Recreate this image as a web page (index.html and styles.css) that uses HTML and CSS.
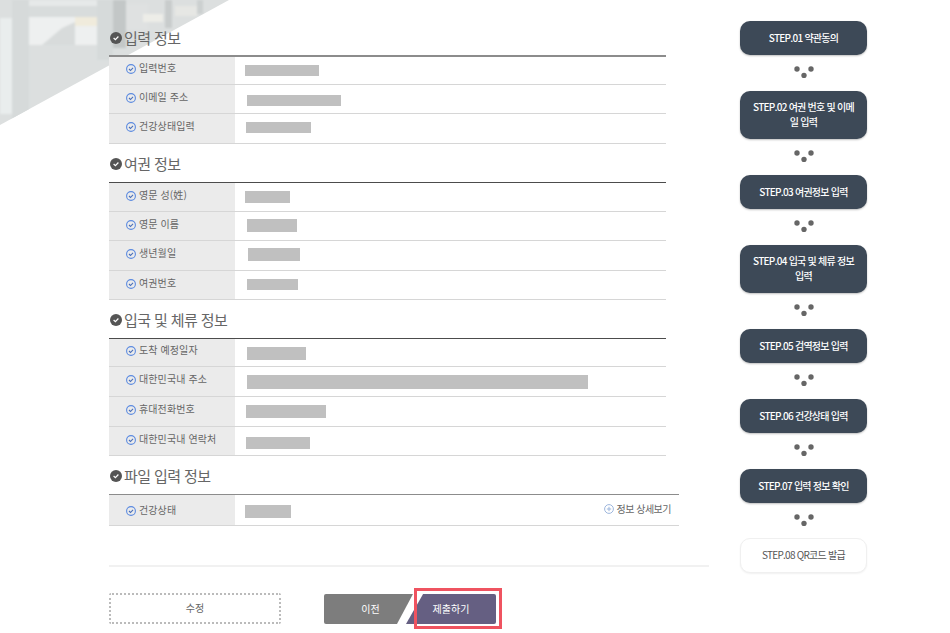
FILE: index.html
```html
<!DOCTYPE html>
<html lang="ko">
<head>
<meta charset="utf-8">
<title>입력 정보 확인</title>
<link rel="stylesheet" href="styles.css">
</head>
<body>
<svg class="photo" width="230" height="126" viewBox="0 0 230 126" aria-hidden="true">
  <defs><clipPath id="corner"><polygon points="0,0 229,0 0,125"/></clipPath>
  <filter id="soft"><feGaussianBlur stdDeviation="0.9"/></filter></defs>
  <g clip-path="url(#corner)">
    <rect width="230" height="126" fill="#dcdfdf"/>
    <g filter="url(#soft)">
      <rect x="0" y="18" width="12" height="96" fill="#e9eded"/>
      <rect x="12" y="0" width="17" height="126" fill="#d6dada"/>
      <rect x="29" y="0" width="68" height="6" fill="#e6e9e9"/>
      <rect x="29" y="6" width="68" height="11" fill="#d8dcdc"/>
      <rect x="29" y="17" width="68" height="28" fill="#eef0f0"/>
      <rect x="75" y="17" width="22" height="9" fill="#f0ebdc"/>
      <polygon points="42,45 62,28 75,22 75,45" fill="#d8dbdb"/>
      <rect x="97" y="0" width="16" height="60" fill="#d6dada"/>
      <rect x="113" y="0" width="13" height="48" fill="#c3c7c7"/>
      <rect x="126" y="4" width="22" height="26" fill="#dfe1e1"/>
      <rect x="143" y="14" width="20" height="8" fill="#ededE8"/>
      <rect x="165" y="0" width="7" height="28" fill="#c8cccc"/>
      <rect x="175" y="6" width="22" height="10" fill="#e6e7e4"/>
      <rect x="197" y="0" width="6" height="14" fill="#ccd0d0"/>
    </g>
  </g>
</svg>
<div class="page">
  <main class="main">
    <h2 class="heading first"><svg class="head-icon" width="12" height="12" viewBox="0 0 12 12"><circle cx="6" cy="6" r="6" fill="#555"/><path d="M3.6 6l1.8 1.7 3-3.2" fill="none" stroke="#fff" stroke-width="1.2"/></svg>입력 정보</h2>
    <div class="table thick">
      <div class="row h28"><div class="label"><svg class="check" width="10" height="10" viewBox="0 0 10 10"><circle cx="5" cy="5" r="4.4" fill="none" stroke="#5b8ae0" stroke-width="1.1"/><path d="M3 5l1.5 1.5L7 3.8" fill="none" stroke="#4a6fb8" stroke-width="1.1"/></svg>입력번호</div><div class="value"><span class="bar" style="--x:10px;--y:8px;--w:74px;--h:11px"></span></div></div>
      <div class="row h29"><div class="label"><svg class="check" width="10" height="10" viewBox="0 0 10 10"><circle cx="5" cy="5" r="4.4" fill="none" stroke="#5b8ae0" stroke-width="1.1"/><path d="M3 5l1.5 1.5L7 3.8" fill="none" stroke="#4a6fb8" stroke-width="1.1"/></svg>이메일 주소</div><div class="value"><span class="bar" style="--x:12px;--y:10px;--w:94px;--h:11px"></span></div></div>
      <div class="row h30"><div class="label"><svg class="check" width="10" height="10" viewBox="0 0 10 10"><circle cx="5" cy="5" r="4.4" fill="none" stroke="#5b8ae0" stroke-width="1.1"/><path d="M3 5l1.5 1.5L7 3.8" fill="none" stroke="#4a6fb8" stroke-width="1.1"/></svg>건강상태입력</div><div class="value"><span class="bar" style="--x:11px;--y:8px;--w:65px;--h:11px"></span></div></div>
    </div>

    <h2 class="heading"><svg class="head-icon" width="12" height="12" viewBox="0 0 12 12"><circle cx="6" cy="6" r="6" fill="#555"/><path d="M3.6 6l1.8 1.7 3-3.2" fill="none" stroke="#fff" stroke-width="1.2"/></svg>여권 정보</h2>
    <div class="table">
      <div class="row h29"><div class="label"><svg class="check" width="10" height="10" viewBox="0 0 10 10"><circle cx="5" cy="5" r="4.4" fill="none" stroke="#5b8ae0" stroke-width="1.1"/><path d="M3 5l1.5 1.5L7 3.8" fill="none" stroke="#4a6fb8" stroke-width="1.1"/></svg>영문 성(姓)</div><div class="value"><span class="bar" style="--x:10px;--y:8px;--w:45px;--h:12px"></span></div></div>
      <div class="row h29"><div class="label"><svg class="check" width="10" height="10" viewBox="0 0 10 10"><circle cx="5" cy="5" r="4.4" fill="none" stroke="#5b8ae0" stroke-width="1.1"/><path d="M3 5l1.5 1.5L7 3.8" fill="none" stroke="#4a6fb8" stroke-width="1.1"/></svg>영문 이름</div><div class="value"><span class="bar" style="--x:12px;--y:7px;--w:50px;--h:13px"></span></div></div>
      <div class="row h30"><div class="label"><svg class="check" width="10" height="10" viewBox="0 0 10 10"><circle cx="5" cy="5" r="4.4" fill="none" stroke="#5b8ae0" stroke-width="1.1"/><path d="M3 5l1.5 1.5L7 3.8" fill="none" stroke="#4a6fb8" stroke-width="1.1"/></svg>생년월일</div><div class="value"><span class="bar" style="--x:13px;--y:7px;--w:52px;--h:13px"></span></div></div>
      <div class="row h29"><div class="label"><svg class="check" width="10" height="10" viewBox="0 0 10 10"><circle cx="5" cy="5" r="4.4" fill="none" stroke="#5b8ae0" stroke-width="1.1"/><path d="M3 5l1.5 1.5L7 3.8" fill="none" stroke="#4a6fb8" stroke-width="1.1"/></svg>여권번호</div><div class="value"><span class="bar" style="--x:12px;--y:8px;--w:51px;--h:11px"></span></div></div>
    </div>

    <h2 class="heading"><svg class="head-icon" width="12" height="12" viewBox="0 0 12 12"><circle cx="6" cy="6" r="6" fill="#555"/><path d="M3.6 6l1.8 1.7 3-3.2" fill="none" stroke="#fff" stroke-width="1.2"/></svg>입국 및 체류 정보</h2>
    <div class="table">
      <div class="row h28"><div class="label"><svg class="check" width="10" height="10" viewBox="0 0 10 10"><circle cx="5" cy="5" r="4.4" fill="none" stroke="#5b8ae0" stroke-width="1.1"/><path d="M3 5l1.5 1.5L7 3.8" fill="none" stroke="#4a6fb8" stroke-width="1.1"/></svg>도착 예정일자</div><div class="value"><span class="bar" style="--x:12px;--y:8px;--w:59px;--h:13px"></span></div></div>
      <div class="row h30"><div class="label"><svg class="check" width="10" height="10" viewBox="0 0 10 10"><circle cx="5" cy="5" r="4.4" fill="none" stroke="#5b8ae0" stroke-width="1.1"/><path d="M3 5l1.5 1.5L7 3.8" fill="none" stroke="#4a6fb8" stroke-width="1.1"/></svg>대한민국내 주소</div><div class="value"><span class="bar" style="--x:12px;--y:8px;--w:341px;--h:14px"></span></div></div>
      <div class="row h30"><div class="label"><svg class="check" width="10" height="10" viewBox="0 0 10 10"><circle cx="5" cy="5" r="4.4" fill="none" stroke="#5b8ae0" stroke-width="1.1"/><path d="M3 5l1.5 1.5L7 3.8" fill="none" stroke="#4a6fb8" stroke-width="1.1"/></svg>휴대전화번호</div><div class="value"><span class="bar" style="--x:11px;--y:8px;--w:80px;--h:13px"></span></div></div>
      <div class="row h29"><div class="label"><svg class="check" width="10" height="10" viewBox="0 0 10 10"><circle cx="5" cy="5" r="4.4" fill="none" stroke="#5b8ae0" stroke-width="1.1"/><path d="M3 5l1.5 1.5L7 3.8" fill="none" stroke="#4a6fb8" stroke-width="1.1"/></svg>대한민국내 연락처</div><div class="value"><span class="bar" style="--x:11px;--y:10px;--w:64px;--h:12px"></span></div></div>
    </div>

    <h2 class="heading"><svg class="head-icon" width="12" height="12" viewBox="0 0 12 12"><circle cx="6" cy="6" r="6" fill="#555"/><path d="M3.6 6l1.8 1.7 3-3.2" fill="none" stroke="#fff" stroke-width="1.2"/></svg>파일 입력 정보</h2>
    <div class="table wide">
      <div class="row h31"><div class="label"><svg class="check" width="10" height="10" viewBox="0 0 10 10"><circle cx="5" cy="5" r="4.4" fill="none" stroke="#5b8ae0" stroke-width="1.1"/><path d="M3 5l1.5 1.5L7 3.8" fill="none" stroke="#4a6fb8" stroke-width="1.1"/></svg>건강상태</div><div class="value split"><span class="bar" style="--x:10px;--y:10px;--w:46px;--h:13px"></span><span class="more"><svg class="plus" width="10" height="10" viewBox="0 0 10 10"><circle cx="5" cy="5" r="4.4" fill="none" stroke="#9db6dc"/><path d="M2.8 5h4.4M5 2.8v4.4" stroke="#9db6dc"/></svg>정보 상세보기</span></div></div>
    </div>

    <div class="divider"></div>
    <div class="actions">
      <button class="btn-edit">수정</button>
      <div class="pair">
        <button class="btn-prev">이전</button>
        <button class="btn-submit">제출하기<span class="highlight"></span></button>
      </div>
    </div>
  </main>

  <aside class="steps">
    <div class="step">STEP.01 약관동의</div>
    <svg class="dots" width="20" height="12" viewBox="0 0 20 12"><circle cx="3" cy="3" r="2.7"/><circle cx="17" cy="3" r="2.7"/><circle cx="10" cy="9.5" r="2.7"/></svg>
    <div class="step">STEP.02 여권 번호 및 이메일 입력</div>
    <svg class="dots" width="20" height="12" viewBox="0 0 20 12"><circle cx="3" cy="3" r="2.7"/><circle cx="17" cy="3" r="2.7"/><circle cx="10" cy="9.5" r="2.7"/></svg>
    <div class="step">STEP.03 여권정보 입력</div>
    <svg class="dots" width="20" height="12" viewBox="0 0 20 12"><circle cx="3" cy="3" r="2.7"/><circle cx="17" cy="3" r="2.7"/><circle cx="10" cy="9.5" r="2.7"/></svg>
    <div class="step">STEP.04 입국 및 체류 정보 입력</div>
    <svg class="dots" width="20" height="12" viewBox="0 0 20 12"><circle cx="3" cy="3" r="2.7"/><circle cx="17" cy="3" r="2.7"/><circle cx="10" cy="9.5" r="2.7"/></svg>
    <div class="step">STEP.05 검역정보 입력</div>
    <svg class="dots" width="20" height="12" viewBox="0 0 20 12"><circle cx="3" cy="3" r="2.7"/><circle cx="17" cy="3" r="2.7"/><circle cx="10" cy="9.5" r="2.7"/></svg>
    <div class="step">STEP.06 건강상태 입력</div>
    <svg class="dots" width="20" height="12" viewBox="0 0 20 12"><circle cx="3" cy="3" r="2.7"/><circle cx="17" cy="3" r="2.7"/><circle cx="10" cy="9.5" r="2.7"/></svg>
    <div class="step">STEP.07 입력 정보 확인</div>
    <svg class="dots last-gap" width="20" height="12" viewBox="0 0 20 12"><circle cx="3" cy="3" r="2.7"/><circle cx="17" cy="3" r="2.7"/><circle cx="10" cy="9.5" r="2.7"/></svg>
    <div class="step todo">STEP.08 QR코드 발급</div>
  </aside>
</div>
</body>
</html>
```
FILE: styles.css
```css
* { box-sizing: border-box; }
html, body { margin: 0; padding: 0; }
body {
  width: 950px;
  height: 633px;
  overflow: hidden;
  background: #fff;
  font-family: "Noto Sans CJK KR", "Noto Sans", sans-serif;
  color: #555;
  position: relative;
}
.photo { position: absolute; left: 0; top: 0; }
.page {
  position: relative;
  display: flex;
  padding-left: 109px;
  gap: 31px;
}
.main { width: 600px; }
.heading {
  display: flex;
  align-items: center;
  gap: 2px;
  height: 38px;
  margin: 0;
  padding: 2px 0 0 1px;
  font-size: 15px;
  font-weight: 400;
  line-height: 20px;
  letter-spacing: -0.6px;
  color: #666;
}
.heading.first { height: 55px; padding-top: 20px; }
.head-icon { flex: none; }
.table {
  width: 557px;
  border-top: 1px solid #4c4c4c;
}
.table.thick { border-top: 2px solid #8c8c8c; }
.table.wide { width: 570px; border-top-color: #8c8c8c; }
.row {
  display: flex;
  border-bottom: 1px solid #d6d6d6;
}
.h28 { height: 28px; }
.h29 { height: 29px; }
.h30 { height: 30px; }
.h31 { height: 31px; }
.label {
  display: flex;
  align-items: center;
  gap: 3px;
  width: 126px;
  flex: none;
  padding: 0 0 6px 17px;
  background: #ebebeb;
  font-size: 10px;
  letter-spacing: 0.1px;
  color: #666;
  white-space: nowrap;
}
.wide .label { padding-bottom: 2px; }
.check { flex: none; margin-top: 3px; }
.plus { flex: none; }
.value { flex: 1; min-width: 0; }
.value.split { display: flex; justify-content: space-between; align-items: flex-start; }
.bar {
  display: block;
  width: var(--w);
  height: var(--h);
  margin-left: var(--x);
  margin-top: var(--y);
  background: #c0c0c0;
}
.more {
  display: flex;
  align-items: center;
  gap: 3px;
  margin-top: 6px;
  margin-right: 8px;
  font-size: 10px;
  line-height: 16px;
  letter-spacing: -0.5px;
  color: #666;
}
.divider {
  height: 2px;
  margin-top: 39px;
  background: #f1f1f1;
}
.actions {
  display: flex;
  margin-top: 26px;
}
button { font-family: inherit; cursor: pointer; padding: 0; border: 0; }
.btn-edit {
  width: 172px;
  height: 31px;
  margin-right: 43px;
  padding-bottom: 2px;
  border: 2px dotted #bbb;
  border-radius: 2px;
  background: #fff;
  font-size: 10px;
  color: #666;
}
.pair { display: flex; margin-top: 1px; }
.btn-prev {
  width: 89px;
  height: 30px;
  padding: 0 0 2px 4px;
  border-radius: 2px 0 0 2px;
  background: #7d7d7d;
  color: #fff;
  font-size: 10px;
  clip-path: polygon(0 0, 100% 0, 82% 100%, 0 100%);
}
.btn-submit {
  position: relative;
  width: 90px;
  height: 30px;
  margin-left: -7px;
  padding-bottom: 2px;
  background: none;
  color: #fff;
  font-size: 10px;
  isolation: isolate;
}
.btn-submit::before {
  content: "";
  position: absolute;
  inset: 0;
  z-index: -1;
  border-radius: 0 2px 2px 0;
  background: #655f82;
  clip-path: polygon(19% 0, 100% 0, 100% 100%, 0 100%);
}
.highlight {
  position: absolute;
  left: 8px;
  top: -6px;
  width: 88px;
  height: 41px;
  border: 3px solid #ef5360;
}
.steps {
  display: flex;
  flex-direction: column;
  align-items: center;
  width: 127px;
  padding-top: 21px;
}
.step {
  display: flex;
  align-items: center;
  justify-content: center;
  width: 127px;
  min-height: 34px;
  padding: 8px 12px 10px;
  border-radius: 10px;
  background: #3d4957;
  box-shadow: 0 1px 2px rgba(0, 0, 0, .25);
  color: #fff;
  font-size: 10px;
  line-height: 15px;
  letter-spacing: -0.75px;
  word-break: break-all;
  text-align: center;
  font-weight: 500;
}
.step.todo {
  background: #fff;
  border: 1px solid #f0f0f0;
  box-shadow: 0 1px 2px rgba(0, 0, 0, .06);
  color: #555;
  font-weight: 400;
}
.dots {
  display: block;
  margin: 11px 0 13px;
  fill: #666;
}
.dots.last-gap { margin-bottom: 12px; }
```
